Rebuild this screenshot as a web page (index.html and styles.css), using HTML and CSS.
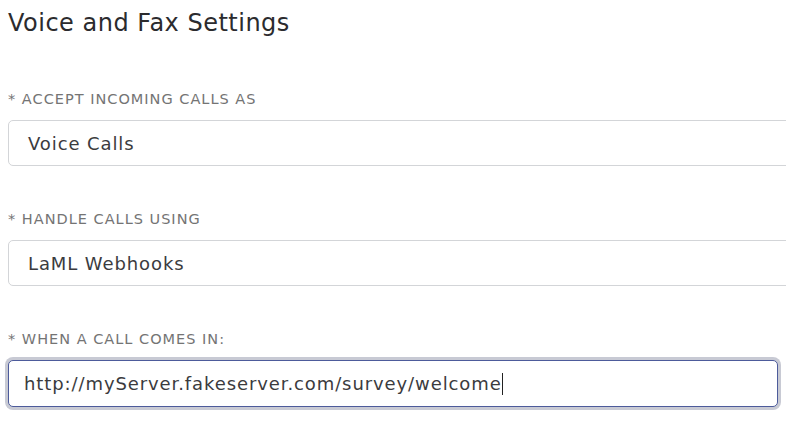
FILE: index.html
```html
<!DOCTYPE html>
<html>
<head>
<meta charset="utf-8">
<link rel="stylesheet" href="styles.css">
</head>
<body>
<div class="page">
  <h1 class="title">Voice and Fax Settings</h1>
  <div class="field">
    <div class="label">* ACCEPT INCOMING CALLS AS</div>
    <div class="control wide">Voice Calls</div>
  </div>
  <div class="field">
    <div class="label">* HANDLE CALLS USING</div>
    <div class="control wide">LaML Webhooks</div>
  </div>
  <div class="field">
    <div class="label">* WHEN A CALL COMES IN:</div>
    <div class="control focused">http://myServer.fakeserver.com/survey/welcome<span class="caret"></span></div>
  </div>
</div>
</body>
</html>
```

FILE: styles.css
```css
html, body {
  margin: 0;
  padding: 0;
  background: #ffffff;
  overflow: hidden;
}
.page {
  width: 770px;
  padding: 0 8px;
  font-family: "DejaVu Sans", sans-serif;
  display: flex;
  flex-direction: column;
}
.title {
  margin: 0;
  padding-top: 8px;
  font-size: 24px;
  letter-spacing: 0.5px;
  line-height: 30px;
  font-weight: 400;
  color: #2b2b2e;
  height: 81px;
}
.field {
  display: flex;
  flex-direction: column;
  margin-bottom: 43px;
}
.label {
  font-size: 14.5px;
  letter-spacing: 1px;
  line-height: 20px;
  color: #747474;
  height: 31px;
}
.control {
  box-sizing: border-box;
  height: 46px;
  border: 1px solid #d3d5d8;
  border-radius: 5px;
  font-size: 18px;
  letter-spacing: 0.9px;
  color: #3b3b3e;
  display: flex;
  align-items: center;
  padding-left: 19px;
  background: #fff;
}
.wide {
  width: 820px;
}
.focused {
  width: 770px;
  height: 47px;
  border-color: #4d5b9b;
  box-shadow: 0 0 0 3px #c8cad4;
  padding-left: 15px;
}
.caret {
  display: inline-block;
  width: 1px;
  height: 22px;
  background: #222;
  margin-left: 0;
}
```
